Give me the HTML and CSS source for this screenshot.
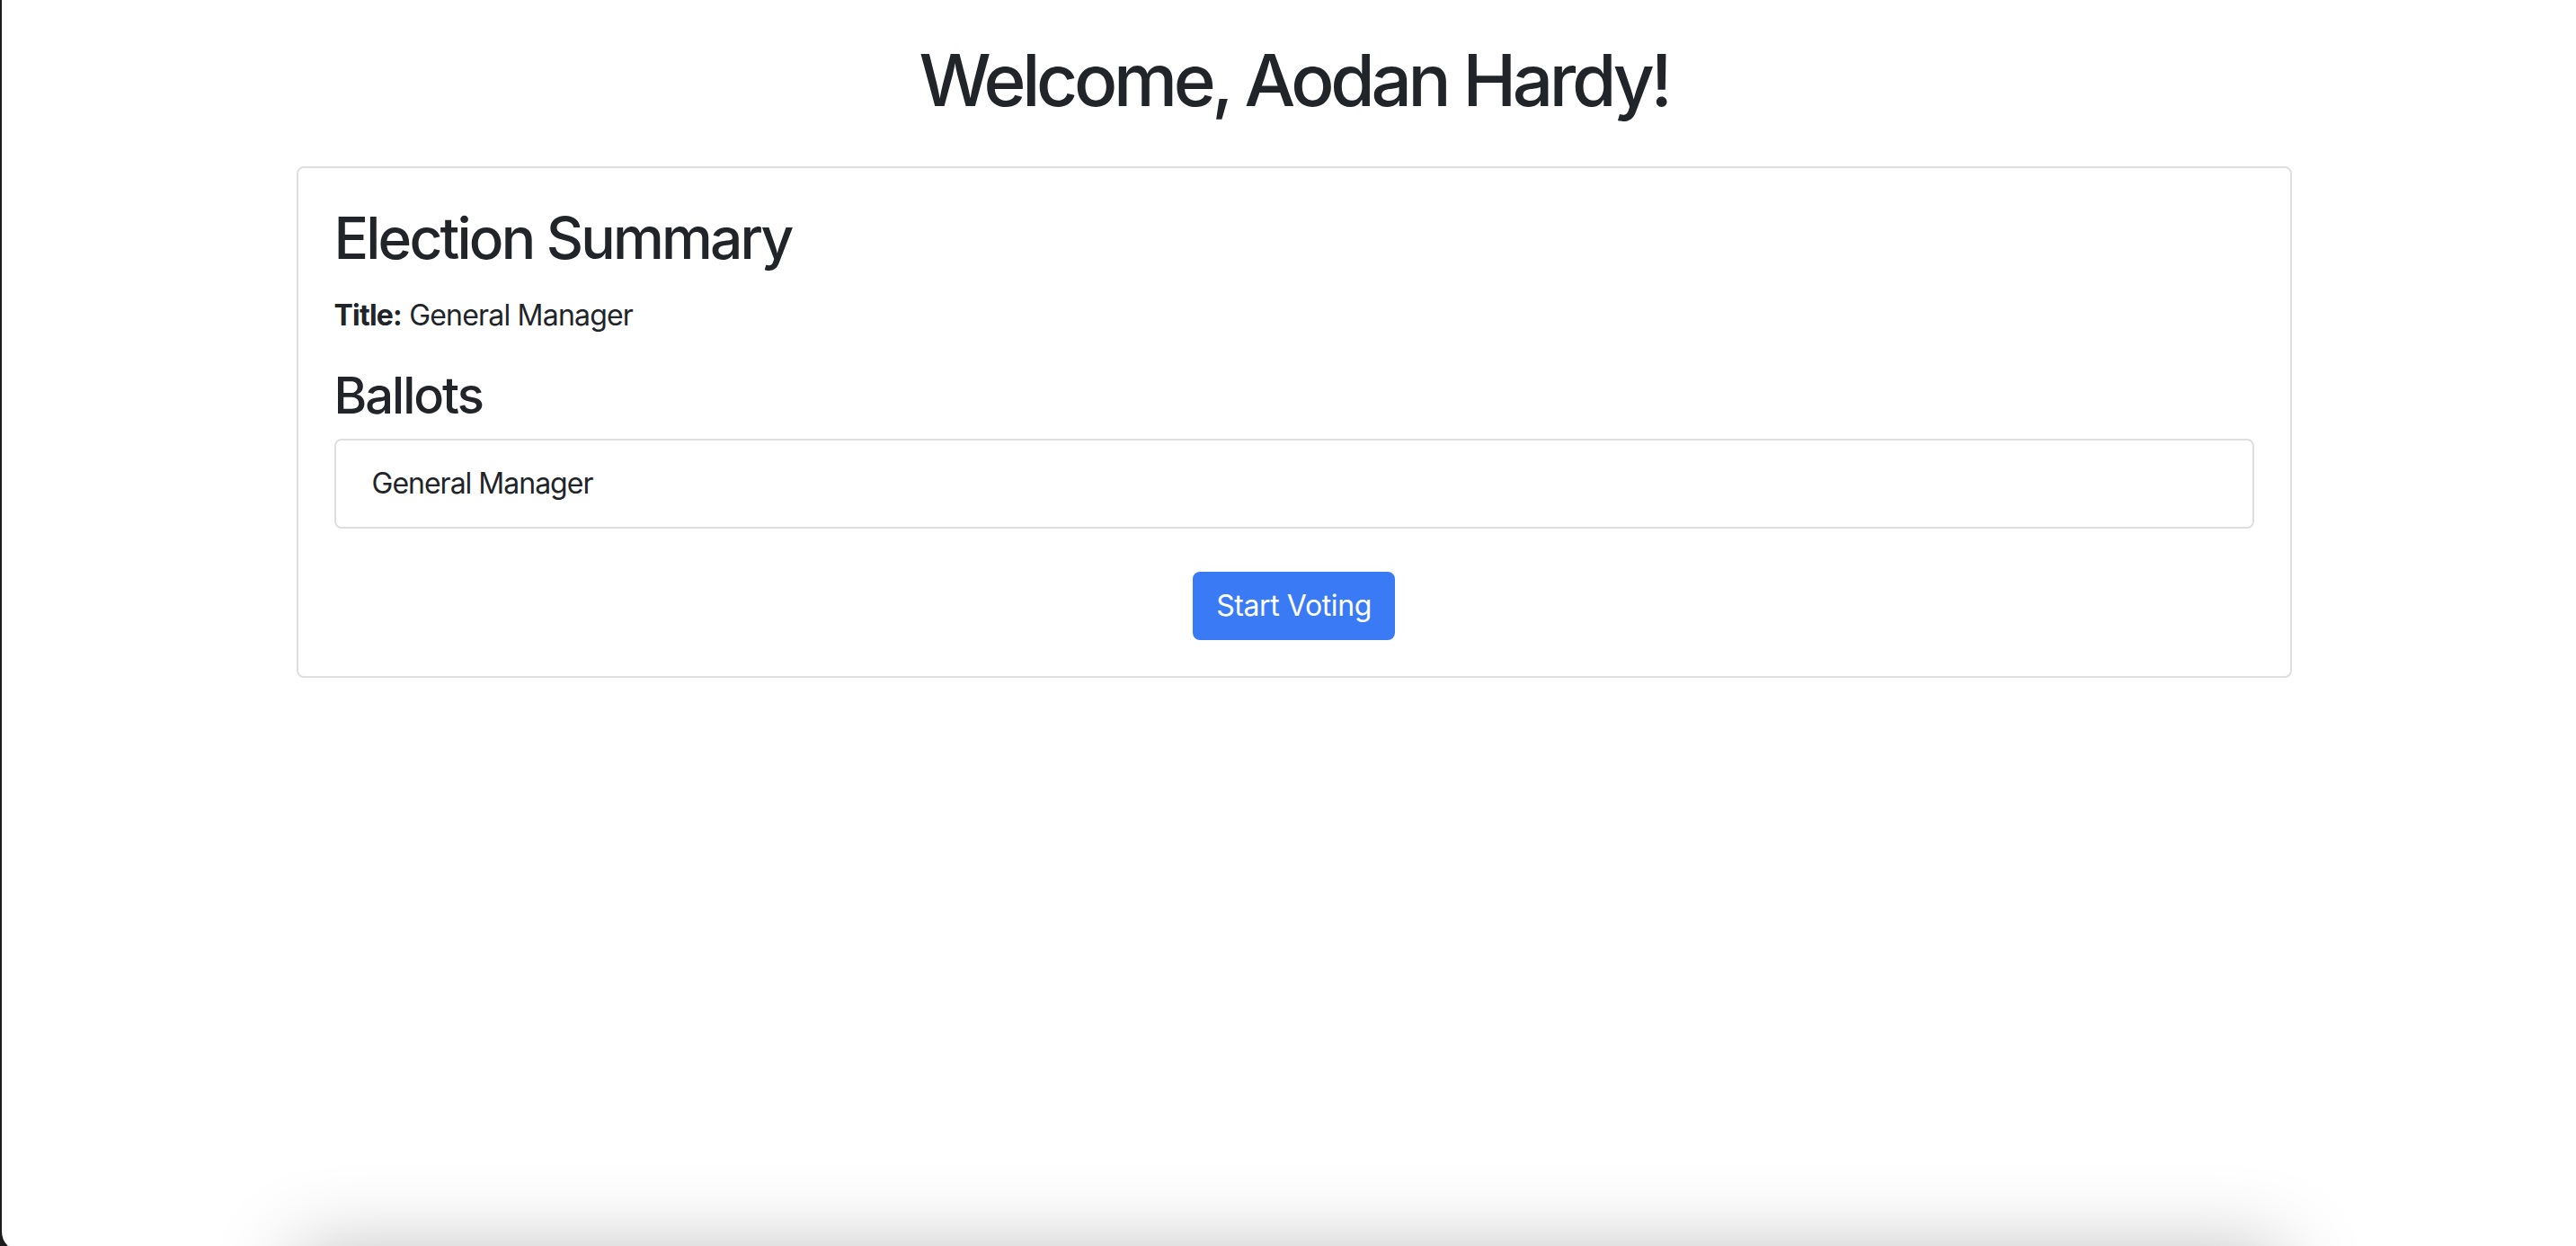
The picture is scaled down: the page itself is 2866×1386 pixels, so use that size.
FILE: index.html
```html
<!DOCTYPE html>
<html lang="en">
<head>
<meta charset="utf-8">
<title>Election Summary</title>
<link rel="stylesheet" href="styles.css">
</head>
<body>
<div class="window">
  <div class="container">
    <h1 class="welcome">Welcome, Aodan Hardy!</h1>
    <div class="card">
      <div class="card-body">
        <h2 class="card-title">Election Summary</h2>
        <p class="meta"><strong>Title:</strong> General Manager</p>
        <h3 class="section-title">Ballots</h3>
        <ul class="list-group">
          <li class="list-item">General Manager</li>
        </ul>
        <div class="actions">
          <button class="btn-primary" type="button">Start Voting</button>
        </div>
      </div>
    </div>
  </div>
  <div class="bottom-sheet"></div>
</div>
</body>
</html>
```

FILE: styles.css
```css
html {
  background: #1c1c1e;
  overflow: hidden;
}
body {
  margin: 0;
  font-family: Inter, "Liberation Sans", sans-serif;
  color: #212529;
  overflow: hidden;
}
.window {
  margin-left: 2px;
  padding-left: 11px;
  background: #ffffff;
  min-height: calc(100vh + 6px);
  border-bottom-left-radius: 22px;
  overflow: hidden;
  box-sizing: border-box;
}
.container {
  max-width: 2220px;
  margin: 0 auto;
  padding-top: 1px;
}
.welcome {
  margin: 40px 0 48px;
  text-align: center;
  font-size: 80px;
  font-weight: 500;
  line-height: 1.2;
  letter-spacing: -4.3px;
}
.card {
  border: 2px solid #dfdfdf;
  border-radius: 8px;
  background: #fff;
}
.card-body {
  padding: 40px;
}
.card-title {
  margin: 0 0 23px;
  font-size: 64px;
  font-weight: 500;
  line-height: 1.2;
  letter-spacing: -2.8px;
}
.meta {
  margin: 0 0 32px;
  font-size: 32px;
  line-height: 48px;
  letter-spacing: -0.8px;
}
.meta strong {
  font-weight: 700;
}
.section-title {
  margin: 0 0 14px;
  font-size: 56px;
  font-weight: 500;
  line-height: 1.2;
  letter-spacing: -2px;
}
.list-group {
  list-style: none;
  margin: 0;
  padding: 0;
}
.list-item {
  border: 2px solid #dfdfdf;
  border-radius: 8px;
  padding: 24px 40px;
  font-size: 32px;
  line-height: 48px;
  letter-spacing: -1px;
}
.actions {
  margin-top: 48px;
  text-align: center;
}
.btn-primary {
  font-family: inherit;
  font-size: 32px;
  line-height: 48px;
  padding: 12px 24px;
  color: #ffffff;
  background: #3a7bf5;
  border: 2px solid #3a7bf5;
  border-radius: 8px;
  letter-spacing: -0.4px;
}
.bottom-sheet {
  position: fixed;
  left: 330px;
  width: 2208px;
  top: calc(100vh + 4px);
  height: 200px;
  background: #fff;
  box-shadow: 0 0 90px rgba(0, 0, 0, 0.25);
}
```
